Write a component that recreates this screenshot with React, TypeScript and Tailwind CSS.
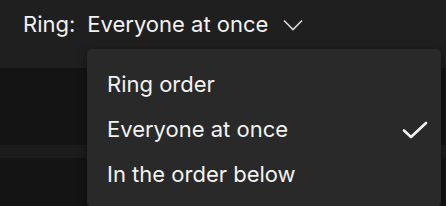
export default function App() {
  const items = ["Ring order", "Everyone at once", "In the order below"]
  const selected = "Everyone at once"

  return (
    <div
      className="relative h-[206px] w-[446px] overflow-hidden bg-[#141414] text-[#f2f2f2]"
      style={{ fontFamily: "Inter, 'Noto Sans', sans-serif" }}
    >
      <div className="flex h-[68px] items-start bg-[#1f1f1f] pl-[23px] pt-[10px] text-[22px] leading-[28px]">
        <span>Ring:</span>
        <span className="ml-[12px]">Everyone at once</span>
        <svg className="ml-[15px] mt-[9px]" width="20" height="12" viewBox="0 0 20 12" fill="none">
          <path d="M1 1.5 L10 10.5 L19 1.5" stroke="#d8d8d8" strokeWidth="1.6" />
        </svg>
      </div>
      <div className="h-[77px]" />
      <div className="h-[13px] bg-[#1c1c1c]" />

      <div className="absolute left-[87px] top-[49px] h-[158px] w-[354px] rounded-[5px] bg-[#292929] pt-[13px] shadow-[0_2px_8px_rgba(0,0,0,0.5)]">
        {items.map((item) => (
          <div
            key={item}
            className="flex h-[45px] items-center justify-between pl-[20px] pr-[13px] text-[22px]"
          >
            <span>{item}</span>
            {item === selected && (
              <svg width="26" height="18" viewBox="0 0 26 18" fill="none">
                <path d="M2 9.5 L9 16 L24 2" stroke="#f2f2f2" strokeWidth="2.6" strokeLinecap="round" strokeLinejoin="round" />
              </svg>
            )}
          </div>
        ))}
      </div>
    </div>
  )
}
